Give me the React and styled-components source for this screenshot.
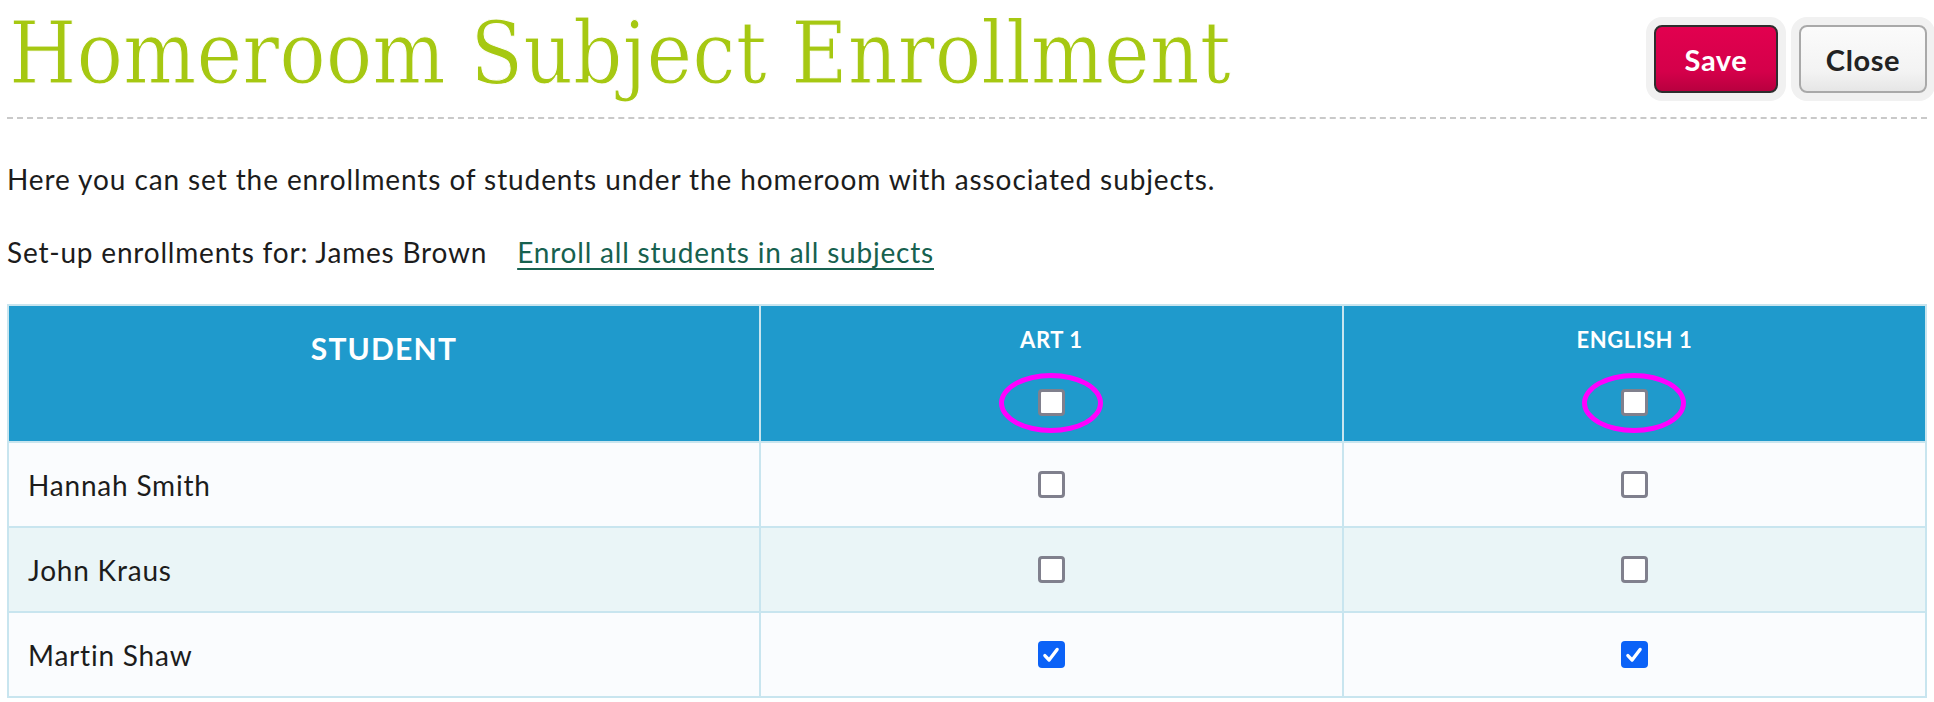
import React, { useState } from 'react';
import styled, { createGlobalStyle } from 'styled-components';

const GlobalStyle = createGlobalStyle`
  body {
    margin: 0;
    background: #fff;
    font-family: 'Lato', 'Liberation Sans', sans-serif;
    color: #1c1c1c;
  }
`;

const Page = styled.div`
  padding: 0 7px;
`;

const TopBar = styled.header`
  display: flex;
  justify-content: space-between;
  align-items: flex-start;
  height: 117px;
  border-bottom: 2px dashed #c9c9c9;
`;

const Title = styled.h1`
  margin: 3px 0 0 2px;
  font-family: 'DejaVu Serif', serif;
  font-stretch: condensed;
  font-weight: normal;
  font-size: 86px;
  line-height: 100px;
  color: #a6c812;
  -webkit-text-stroke: 1px #fff;
  paint-order: fill stroke;
`;

const Actions = styled.div`
  display: flex;
  gap: 21px;
  margin-top: 25px;
`;

const Button = styled.button`
  width: ${(p) => (p.$primary ? 124 : 128)}px;
  height: 68px;
  padding: 0;
  border-radius: 8px;
  font-family: 'Lato', sans-serif;
  font-weight: 700;
  font-size: 29px;
  letter-spacing: 0.6px;
  cursor: pointer;
  box-shadow: 0 0 0 8px #f1f1f1;
  border: 2px solid ${(p) => (p.$primary ? '#2e2e2e' : '#a9a9a9')};
  color: ${(p) => (p.$primary ? '#fff' : '#222')};
  background: ${(p) =>
    p.$primary
      ? 'linear-gradient(#e2004f, #d4004a 70%, #b8003f)'
      : 'linear-gradient(#fbfbfb, #f3f3f3 70%, #e6e6e6)'};
`;

const Intro = styled.p`
  margin: 46px 0 0;
  font-size: 28px;
  letter-spacing: 0.9px;
  line-height: 29px;
`;

const SetupLine = styled.p`
  margin: 44px 0 0;
  font-size: 28px;
  letter-spacing: 0.8px;
  line-height: 29px;
  display: flex;
  gap: 30px;
`;

const Link = styled.a`
  color: #17614f;
  text-decoration: underline;
  text-decoration-thickness: 2px;
  text-underline-offset: 5px;
  cursor: pointer;
`;

const Table = styled.table`
  margin-top: 37px;
  width: 100%;
  border-collapse: collapse;
  table-layout: fixed;
`;

const HeadCell = styled.th`
  height: ${(p) => 135 - (p.$main ? 24 : 21)}px;
  padding: ${(p) => (p.$main ? 24 : 21)}px 0 0;
  vertical-align: top;
  background: #1f9acc;
  border: 2px solid #c8e5ef;
  color: #fff;
  text-align: center;
`;

const HeadLabel = styled.div`
  font-size: ${(p) => (p.$main ? 30 : 22)}px;
  letter-spacing: ${(p) => (p.$main ? 1.2 : 0.6)}px;
  font-weight: 700;
  line-height: 1.2;
`;

const Marked = styled.div`
  position: relative;
  display: inline-flex;
  margin-top: 36px;

  &::after {
    content: '';
    position: absolute;
    left: 50%;
    top: 50%;
    width: 94px;
    height: 50px;
    transform: translate(-50%, -50%);
    border: 5px solid #ff00ff;
    border-radius: 50%;
    pointer-events: none;
  }
`;

const Row = styled.tr`
  background: ${(p) => (p.$alt ? '#eaf5f7' : '#fafcfe')};
`;

const Cell = styled.td`
  height: 83px;
  padding: 0 0 0 19px;
  border: 2px solid #c8e5ef;
  font-size: 28px;
  letter-spacing: 0.8px;
  vertical-align: middle;
  text-align: ${(p) => (p.$center ? 'center' : 'left')};
  ${(p) => p.$center && 'padding: 0; line-height: 0;'}
`;

const Box = styled.span`
  display: inline-flex;
  align-items: center;
  justify-content: center;
  box-sizing: border-box;
  width: 27px;
  height: 27px;
  border-radius: 4px;
  cursor: pointer;
  border: ${(p) => (p.$checked ? 'none' : '3px solid #80808d')};
  background: ${(p) => (p.$checked ? '#0b62f7' : '#fff')};
`;

const Checkbox = ({ checked, onToggle }) => (
  <Box $checked={checked} onClick={onToggle} role="checkbox" aria-checked={checked}>
    {checked && (
      <svg width="20" height="20" viewBox="0 0 18 18">
        <path d="M3.5 9.5 L7.3 13.5 L14.5 4" fill="none" stroke="#fff" strokeWidth="3" strokeLinecap="round" strokeLinejoin="round" />
      </svg>
    )}
  </Box>
);

const subjects = ['ART 1', 'ENGLISH 1'];

const initialStudents = [
  { id: 1, name: 'Hannah Smith', enrolled: [false, false] },
  { id: 2, name: 'John Kraus', enrolled: [false, false] },
  { id: 3, name: 'Martin Shaw', enrolled: [true, true] },
];

const App = () => {
  const [students, setStudents] = useState(initialStudents);
  const [allFor, setAllFor] = useState([false, false]);

  const toggle = (sid, col) => {
    setStudents((list) =>
      list.map((s) =>
        s.id === sid ? { ...s, enrolled: s.enrolled.map((v, i) => (i === col ? !v : v)) } : s
      )
    );
  };

  const toggleColumn = (col) => {
    const next = !allFor[col];
    setAllFor((a) => a.map((v, i) => (i === col ? next : v)));
    setStudents((list) =>
      list.map((s) => ({ ...s, enrolled: s.enrolled.map((v, i) => (i === col ? next : v)) }))
    );
  };

  return (
    <Page>
      <GlobalStyle />
      <TopBar>
        <Title>Homeroom Subject Enrollment</Title>
        <Actions>
          <Button $primary>Save</Button>
          <Button>Close</Button>
        </Actions>
      </TopBar>

      <Intro>Here you can set the enrollments of students under the homeroom with associated subjects.</Intro>
      <SetupLine>
        <span>Set-up enrollments for: James Brown</span>
        <Link>Enroll all students in all subjects</Link>
      </SetupLine>

      <Table>
        <colgroup>
          <col style={{ width: '39.2%' }} />
          <col style={{ width: '30.4%' }} />
          <col style={{ width: '30.4%' }} />
        </colgroup>
        <thead>
          <tr>
            <HeadCell $main>
              <HeadLabel $main>STUDENT</HeadLabel>
            </HeadCell>
            {subjects.map((sub, i) => (
              <HeadCell key={sub}>
                <HeadLabel>{sub}</HeadLabel>
                <Marked>
                  <Checkbox checked={allFor[i]} onToggle={() => toggleColumn(i)} />
                </Marked>
              </HeadCell>
            ))}
          </tr>
        </thead>
        <tbody>
          {students.map((s, idx) => (
            <Row key={s.id} $alt={idx % 2 === 1}>
              <Cell>{s.name}</Cell>
              {s.enrolled.map((on, i) => (
                <Cell key={i} $center>
                  <Checkbox checked={on} onToggle={() => toggle(s.id, i)} />
                </Cell>
              ))}
            </Row>
          ))}
        </tbody>
      </Table>
    </Page>
  );
};

export default App;
